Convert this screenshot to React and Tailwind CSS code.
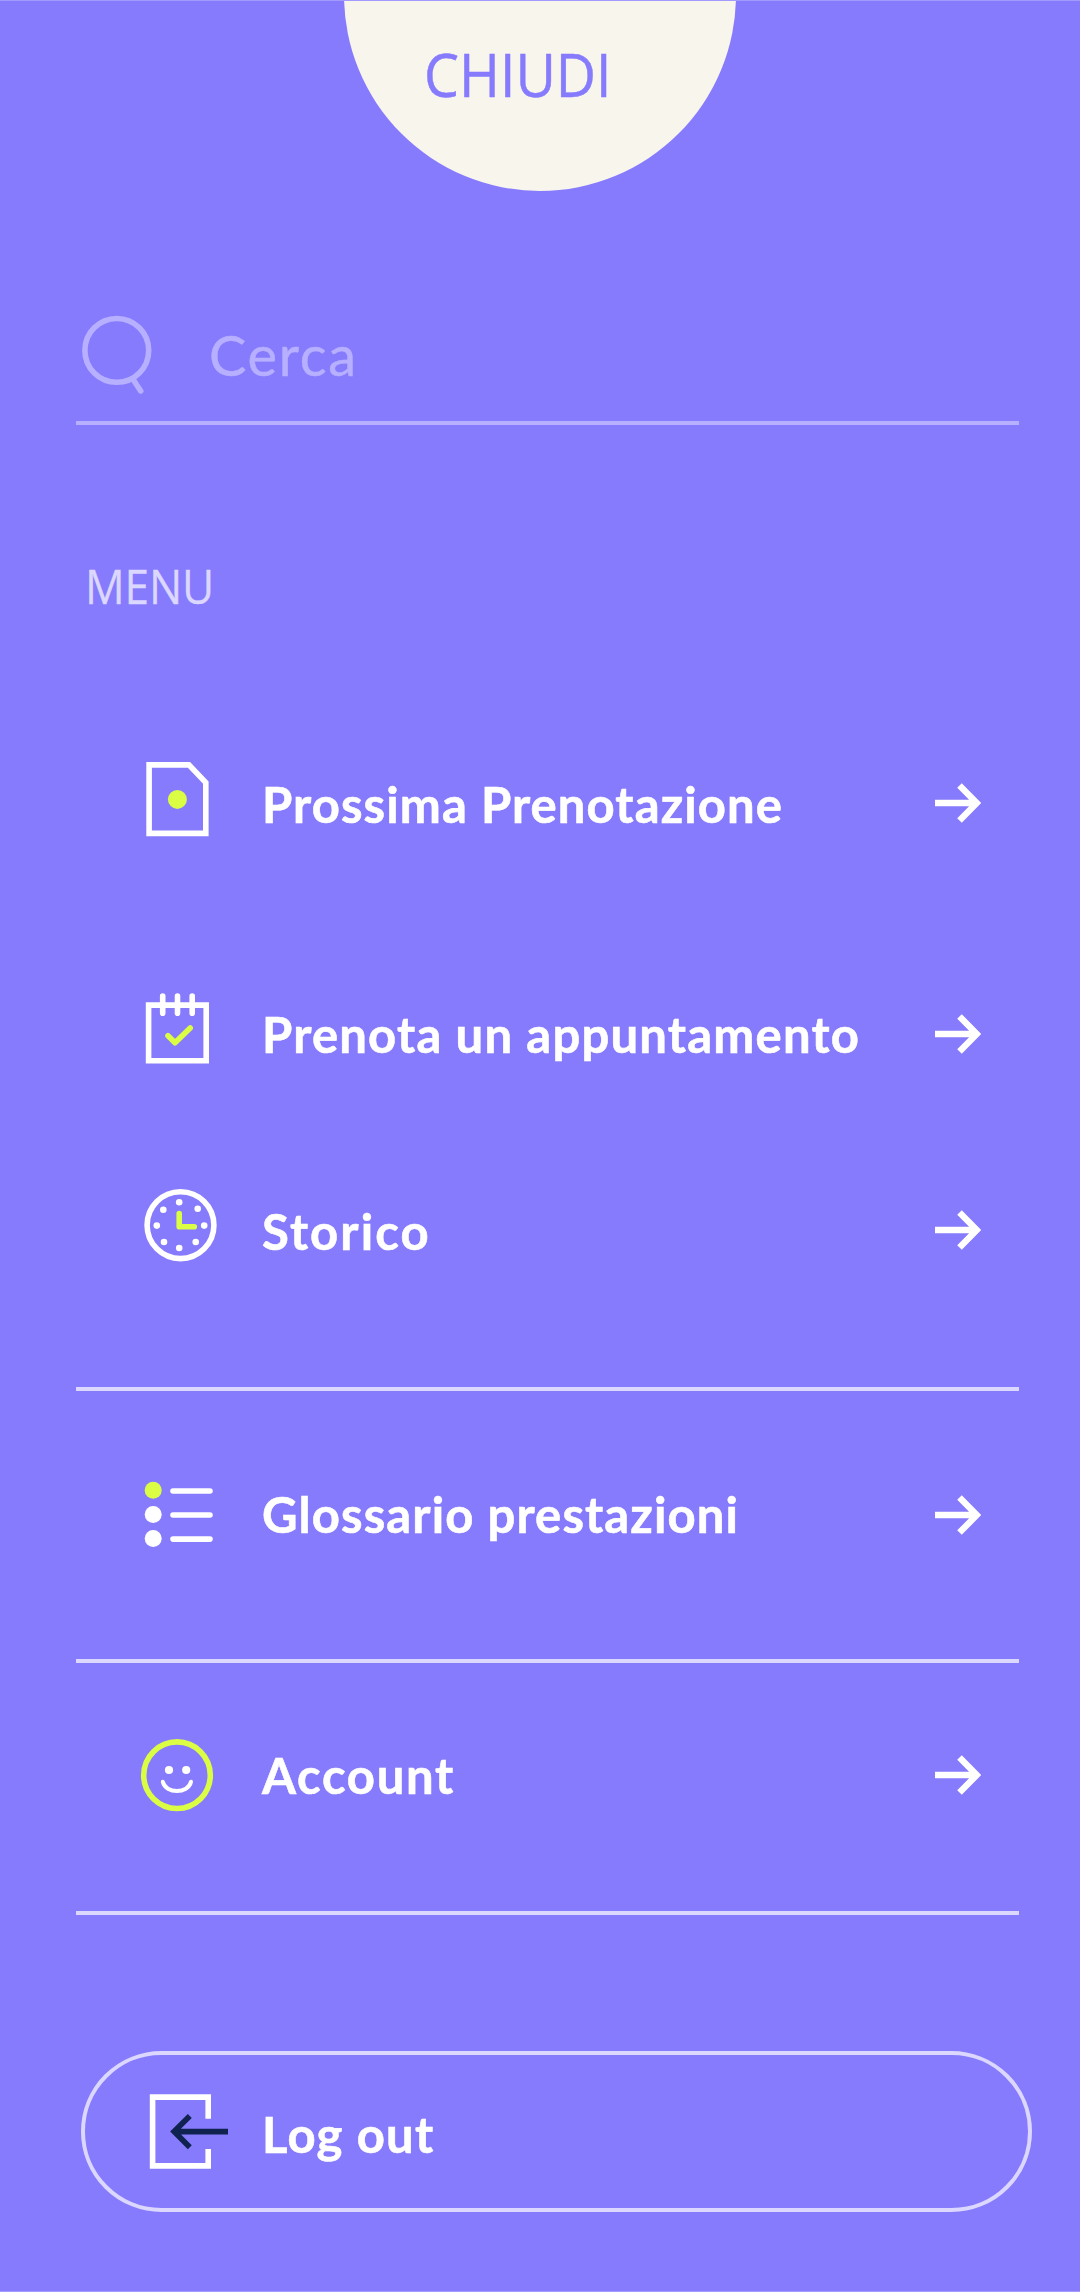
import React from 'react';

const LIME = '#dbfd44';

function Arrow() {
  return (
    <svg className="mt-5 ml-auto h-10 w-[46px]" viewBox="0 0 46 40" fill="none" stroke="#fff" strokeWidth="6.4">
      <path d="M0 20H40M24.5 2.4L41.8 20L24.5 37.6" />
    </svg>
  );
}

function Icon({ viewBox, children }) {
  return (
    <svg
      className="h-20 w-20 shrink-0 overflow-visible"
      viewBox={viewBox}
      fill="none"
      stroke="#fff"
      strokeWidth="5.6"
    >
      {children}
    </svg>
  );
}

function DocumentIcon() {
  return (
    <Icon viewBox="140 763 80 80">
      <path d="M149.1 764.9H188.9L205.8 782.6V833.4H149.1Z" />
      <circle cx="177.4" cy="799.4" r="9.5" fill={LIME} stroke="none" />
    </Icon>
  );
}

function CalendarIcon() {
  return (
    <Icon viewBox="140 994 80 80">
      <path d="M148.6 1005.1H206.2V1060.8H148.6Z" />
      <path d="M162.7 996V1013.3M177.5 996V1013.3M192.2 996V1013.3" strokeLinecap="round" />
      <path d="M168 1035.8L175 1042.8L190.2 1028" stroke={LIME} strokeLinecap="round" strokeLinejoin="round" />
    </Icon>
  );
}

const CLOCK_DOTS = [
  [179.2, 1202.3], [197.7, 1208.7], [204.2, 1225.6], [195.7, 1242],
  [179.2, 1248], [164, 1242], [156.8, 1225.6], [163.3, 1209.8],
];

function ClockIcon() {
  return (
    <Icon viewBox="140 1190 80 80">
      <circle cx="180.5" cy="1225.2" r="33.4" />
      {CLOCK_DOTS.map(([x, y]) => (
        <circle key={`${x}-${y}`} cx={x} cy={y} r="3.3" fill="#fff" stroke="none" />
      ))}
      <path d="M179.2 1213.6V1226.8H194.3" stroke={LIME} strokeLinecap="round" strokeLinejoin="round" />
    </Icon>
  );
}

function ListIcon() {
  return (
    <Icon viewBox="140 1475 80 80">
      <circle cx="153.2" cy="1490.3" r="8.5" fill={LIME} stroke="none" />
      <circle cx="153.2" cy="1514.4" r="8.5" fill="#fff" stroke="none" />
      <circle cx="153.2" cy="1538.5" r="8.5" fill="#fff" stroke="none" />
      <path d="M173 1491H210M173 1515H210M173 1539.1H210" strokeLinecap="round" />
    </Icon>
  );
}

function SmileyIcon() {
  return (
    <Icon viewBox="140 1735 80 80">
      <circle cx="177" cy="1775.2" r="33.3" stroke={LIME} />
      <circle cx="169" cy="1770" r="4.1" fill="#fff" stroke="none" />
      <circle cx="186.2" cy="1770" r="4.1" fill="#fff" stroke="none" />
      <path d="M162.8 1781.8C165.5 1794 188.3 1794 191 1781.8" strokeWidth="4" strokeLinecap="round" />
    </Icon>
  );
}

function LogoutIcon() {
  return (
    <Icon viewBox="140 2091 80 80">
      <path d="M208.2 2118.7V2097.1H152.6V2165.9H208.2V2149" />
      <path d="M176 2131.6H228M189.8 2116L174.1 2131.6L189.8 2147.2" stroke="#10224f" />
    </Icon>
  );
}

const LABEL = "ml-[42px] whitespace-nowrap font-['Lato',sans-serif] text-[49px] leading-[60px] font-bold [-webkit-text-stroke:0.6px_white]";

function MenuItem({ icon, label, className, labelClass }) {
  return (
    <a className={`flex h-20 items-start pr-[99px] pl-[140px] ${className}`}>
      {icon}
      <span className={`${LABEL} ${labelClass}`}>{label}</span>
      <Arrow />
    </a>
  );
}

function Divider({ className }) {
  return <div className={`mr-[61px] ml-[76px] h-1 shrink-0 bg-[#dbd7ff] ${className}`} />;
}

export default function App() {
  return (
    <div className="flex h-[2292px] w-[1080px] flex-col overflow-hidden border-y border-[#a39aff] bg-[#867afd] text-white">
      <header className="-mt-px flex h-[191px] shrink-0 justify-center">
        <button className="-mt-[201px] flex h-[392px] w-[392px] shrink-0 items-start rounded-full bg-[#f8f5ed] pt-[245px] pl-[80px] font-['Open_Sans',sans-serif] text-[60px] leading-[60px] text-[#867afd]">
          <span className="origin-left scale-x-[0.925] [-webkit-text-stroke:0.5px_#867afd]">CHIUDI</span>
        </button>
      </header>

      <label className="mt-[109px] mr-[61px] ml-[76px] flex h-[125px] shrink-0 items-start border-b-4 border-[#b7afff] text-[#b7afff]">
        <svg className="h-[100px] w-20" viewBox="76 300 80 100" fill="none" stroke="currentColor" strokeWidth="5.6">
          <circle cx="116.8" cy="350.4" r="31.9" />
          <path d="M133.5 380L140.7 391" strokeLinecap="round" />
        </svg>
        <span className="mt-[25px] ml-[53px] font-['Lato',sans-serif] text-[56px] leading-[60px] tracking-[1.7px] [-webkit-text-stroke:0.5px_#b7afff]">Cerca</span>
      </label>

      <h2 className="mt-[131px] ml-[85px] w-[141px] shrink-0 origin-left scale-x-[0.92] font-['Open_Sans',sans-serif] text-[48px] leading-[60px] tracking-[-0.2px] text-[#dbd7ff] [-webkit-text-stroke:0.3px_#dbd7ff]">
        MENU
      </h2>

      <nav className="flex flex-col">
        <MenuItem icon={<DocumentIcon />} label="Prossima Prenotazione" className="mt-[147px]" labelClass="mt-[11px] tracking-[1.1px]" />
        <MenuItem icon={<CalendarIcon />} label="Prenota un appuntamento" className="mt-[151px]" labelClass="mt-[10px] tracking-[1.2px]" />
        <MenuItem icon={<ClockIcon />} label="Storico" className="mt-[116px]" labelClass="mt-[11px] tracking-[2.1px]" />
        <Divider className="mt-[117px]" />
        <MenuItem icon={<ListIcon />} label="Glossario prestazioni" className="mt-[84px]" labelClass="mt-[9px] tracking-[1.1px]" />
        <Divider className="mt-[104px]" />
        <MenuItem icon={<SmileyIcon />} label="Account" className="mt-[72px]" labelClass="mt-[10px] tracking-[1.7px]" />
        <Divider className="mt-[96px]" />
      </nav>

      <button className="mt-[136px] ml-[81px] flex h-[161px] w-[951px] shrink-0 items-start rounded-full border-4 border-[#dbd7ff] pt-9 pl-[55px]">
        <LogoutIcon />
        <span className={`${LABEL} mt-[13px] tracking-[1.2px]`}>Log out</span>
      </button>
    </div>
  );
}
